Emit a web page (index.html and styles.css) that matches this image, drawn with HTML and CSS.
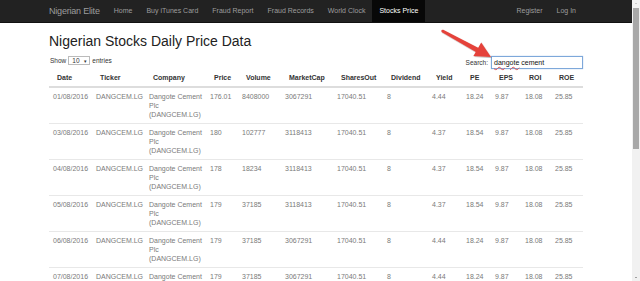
FILE: index.html
```html
<!DOCTYPE html>
<html lang="en">
<head>
  <meta charset="UTF-8">
  <title>Nigerian Stocks Daily Price Data</title>
  <link rel="stylesheet" href="styles.css">
</head>
<body>
  <div class="page">
    <nav class="navbar">
      <div class="nav-inner">
        <a class="brand" href="#">Nigerian Elite</a>
        <ul class="nav">
          <li><a href="#">Home</a></li>
          <li><a href="#">Buy iTunes Card</a></li>
          <li><a href="#">Fraud Report</a></li>
          <li><a href="#">Fraud Records</a></li>
          <li><a href="#">World Clock</a></li>
          <li class="active"><a href="#">Stocks Price</a></li>
        </ul>
        <ul class="nav nav-right">
          <li><a href="#">Register</a></li>
          <li><a href="#">Log In</a></li>
        </ul>
      </div>
    </nav>

    <main class="container">
      <h1>Nigerian Stocks Daily Price Data</h1>
      <div class="toolbar">
        <label class="length">Show
          <span class="select">10 <i>&#9662;</i></span>
          entries</label>
        <label class="filter">Search:
          <span class="search"><span class="typo">dangote</span> cement</span>
        </label>
      </div>

      <table class="stocks">
        <colgroup>
          <col style="width:43px"><col style="width:53px"><col style="width:61px">
          <col style="width:32px"><col style="width:43px"><col style="width:52px">
          <col style="width:50px"><col style="width:45px"><col style="width:34px">
          <col style="width:29px"><col style="width:30px"><col style="width:30px">
          <col>
        </colgroup>
        <thead>
          <tr>
            <th>Date</th><th>Ticker</th><th>Company</th><th>Price</th><th>Volume</th>
            <th>MarketCap</th><th>SharesOut</th><th>Dividend</th><th>Yield</th>
            <th>PE</th><th>EPS</th><th>ROI</th><th>ROE</th>
          </tr>
        </thead>
        <tbody>
          <tr>
            <td class="c-date">01/08/2016</td><td>DANGCEM.LG</td><td class="c-co">Dangote Cement Plc (DANGCEM.LG)</td>
            <td class="c-price">176.01</td><td>8408000</td><td>3067291</td><td>17040.51</td><td>8</td>
            <td>4.44</td><td class="c-pe">18.24</td><td class="c-eps">9.87</td><td class="c-roi">18.08</td><td>25.85</td>
          </tr>
          <tr>
            <td class="c-date">03/08/2016</td><td>DANGCEM.LG</td><td class="c-co">Dangote Cement Plc (DANGCEM.LG)</td>
            <td class="c-price">180</td><td>102777</td><td>3118413</td><td>17040.51</td><td>8</td>
            <td>4.37</td><td class="c-pe">18.54</td><td class="c-eps">9.87</td><td class="c-roi">18.08</td><td>25.85</td>
          </tr>
          <tr>
            <td class="c-date">04/08/2016</td><td>DANGCEM.LG</td><td class="c-co">Dangote Cement Plc (DANGCEM.LG)</td>
            <td class="c-price">178</td><td>18234</td><td>3118413</td><td>17040.51</td><td>8</td>
            <td>4.37</td><td class="c-pe">18.54</td><td class="c-eps">9.87</td><td class="c-roi">18.08</td><td>25.85</td>
          </tr>
          <tr>
            <td class="c-date">05/08/2016</td><td>DANGCEM.LG</td><td class="c-co">Dangote Cement Plc (DANGCEM.LG)</td>
            <td class="c-price">179</td><td>37185</td><td>3118413</td><td>17040.51</td><td>8</td>
            <td>4.37</td><td class="c-pe">18.54</td><td class="c-eps">9.87</td><td class="c-roi">18.08</td><td>25.85</td>
          </tr>
          <tr>
            <td class="c-date">06/08/2016</td><td>DANGCEM.LG</td><td class="c-co">Dangote Cement Plc (DANGCEM.LG)</td>
            <td class="c-price">179</td><td>37185</td><td>3067291</td><td>17040.51</td><td>8</td>
            <td>4.44</td><td class="c-pe">18.24</td><td class="c-eps">9.87</td><td class="c-roi">18.08</td><td>25.85</td>
          </tr>
          <tr>
            <td class="c-date">07/08/2016</td><td>DANGCEM.LG</td><td class="c-co">Dangote Cement Plc (DANGCEM.LG)</td>
            <td class="c-price">179</td><td>37185</td><td>3067291</td><td>17040.51</td><td>8</td>
            <td>4.44</td><td class="c-pe">18.24</td><td class="c-eps">9.87</td><td class="c-roi">18.08</td><td>25.85</td>
          </tr>
        </tbody>
      </table>
    </main>

    <!-- annotation arrow pointing at the search box -->
    <svg class="arrow" width="640" height="281" viewBox="0 0 640 281">
      <defs>
        <filter id="shadow" x="-20%" y="-20%" width="140%" height="140%">
          <feDropShadow dx="0.6" dy="0.8" stdDeviation="0.7" flood-color="#000" flood-opacity="0.35"/>
        </filter>
      </defs>
      <g fill="#e5433a" filter="url(#shadow)">
        <polygon points="443.2,29.8 479.6,48.4 477.2,52.8 442.0,32.2"/>
        <circle cx="442.6" cy="31" r="1.3"/>
        <polygon points="491,57 473.4,56 481.2,42.6"/>
      </g>
    </svg>
  </div>

  <div class="scrollbar">
    <span class="sb-up"></span>
    <span class="sb-thumb"></span>
    <span class="sb-track"></span>
    <span class="sb-down"></span>
  </div>
</body>
</html>
```

FILE: styles.css
```css
* {
  box-sizing: border-box;
  margin: 0;
  padding: 0;
}
html, body {
  width: 640px;
  height: 281px;
  overflow: hidden;
  background: #fff;
  font-family: "Liberation Sans", Arial, sans-serif;
  color: #333;
}
body {
  display: flex;
}
a {
  text-decoration: none;
}

.page {
  position: relative;
  width: 632px;
  flex: none;
}

/* Navbar */
.navbar {
  height: 23px;
  background: #222;
  border-bottom: 1px solid #111;
}
.nav-inner {
  width: 534px;
  margin: 0 auto;
  display: flex;
  height: 100%;
}
.brand {
  color: #9d9d9d;
  font-size: 9px;
  letter-spacing: -0.2px;
  line-height: 22px;
  padding-right: 7px;
}
.nav {
  list-style: none;
  display: flex;
}
.nav a {
  display: block;
  padding: 0 7px;
  line-height: 22px;
  font-size: 7px;
  color: #9d9d9d;
}
.nav .active a {
  background: #080808;
  color: #fff;
}
.nav-right {
  margin-left: auto;
}

/* Content */
.container {
  width: 534px;
  margin: 0 auto;
}
h1 {
  font-size: 14px;
  font-weight: 400;
  line-height: 17px;
  color: #222;
  margin-top: 10px;
}
.toolbar {
  display: flex;
  justify-content: space-between;
  align-items: center;
  font-size: 6.5px;
  color: #333;
  margin-top: 3px;
  height: 15px;
}
.length {
  display: flex;
  align-items: center;
  gap: 2px;
  margin-left: 1px;
}
.select {
  display: inline-flex;
  align-items: center;
  justify-content: space-between;
  width: 22px;
  height: 9px;
  border: 1px solid #bbb;
  padding: 0 2px 0 3px;
  font-size: 6.5px;
  background: #fff;
}
.select i {
  font-style: normal;
  font-size: 5px;
}
.filter {
  display: flex;
  align-items: center;
  gap: 3px;
  margin-top: 3px;
}
.search {
  display: block;
  width: 92px;
  height: 13px;
  border: 1px solid #7ea8da;
  box-shadow: 0 0 1px #9bbde6;
  padding: 0 2px;
  line-height: 11px;
  font-size: 7px;
  color: #111;
}
.typo {
  text-decoration: underline wavy #e05050;
  text-decoration-thickness: 0.5px;
  text-underline-offset: 1px;
}

/* Table */
.stocks {
  width: 100%;
  border-collapse: collapse;
  table-layout: fixed;
  margin-top: 1px;
  font-size: 7px;
}
.stocks th {
  text-align: left;
  font-weight: 700;
  color: #333;
  line-height: 9px;
  padding: 4px 2px 4px 8px;
  border-bottom: 2px solid #ddd;
  white-space: nowrap;
}
.stocks td {
  vertical-align: top;
  color: #7a7a7a;
  line-height: 9px;
  padding: 4px 3px 4px 4px;
  border-bottom: 1px solid #e8e8e8;
  white-space: nowrap;
}
.stocks td.c-co {
  white-space: normal;
}
.c-date, .c-co, .c-price { color: #80766c; }
.c-eps { color: #857a66; }
.c-pe { color: #6f7884; }
.c-roi { color: #6a7f98; }

.arrow {
  position: absolute;
  left: 0;
  top: 0;
  pointer-events: none;
}

/* fake browser scrollbar */
.scrollbar {
  width: 8px;
  height: 281px;
  background: #f1f1f1;
  display: flex;
  flex-direction: column;
  align-items: center;
}
.sb-up, .sb-down {
  height: 8px;
  width: 8px;
  flex: none;
  position: relative;
}
.sb-up::after, .sb-down::after {
  content: "";
  position: absolute;
  left: 2.5px;
  width: 0;
  height: 0;
  border-left: 1.5px solid transparent;
  border-right: 1.5px solid transparent;
}
.sb-up::after {
  top: 3px;
  border-bottom: 1.5px solid #a3a3a3;
}
.sb-down::after {
  top: 4px;
  border-top: 1.5px solid #505050;
}
.sb-thumb {
  width: 6px;
  height: 141px;
  background: #a8a8a8;
  flex: none;
}
.sb-track {
  flex: 1;
}
```
